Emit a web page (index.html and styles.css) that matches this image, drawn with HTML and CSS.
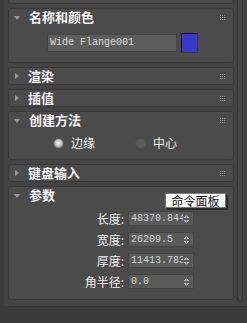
FILE: index.html
```html
<!DOCTYPE html>
<html>
<head>
<meta charset="utf-8">
<link rel="stylesheet" href="styles.css">
</head>
<body>
<div class="app">
  <div class="frame">
    <div class="panels">
      <div class="panel stub"></div>

      <div class="panel">
        <div class="head"><span class="tri down"></span><span class="title">名称和颜色</span><span class="grip"></span></div>
        <div class="body name-body">
          <div class="name-field">Wide Flange001</div>
          <div class="swatch"></div>
        </div>
      </div>

      <div class="panel">
        <div class="head"><span class="tri right"></span><span class="title">渲染</span><span class="grip"></span></div>
      </div>

      <div class="panel">
        <div class="head"><span class="tri right"></span><span class="title">插值</span><span class="grip"></span></div>
      </div>

      <div class="panel">
        <div class="head"><span class="tri down"></span><span class="title">创建方法</span><span class="grip"></span></div>
        <div class="body method-body">
          <label class="radio-opt"><span class="radio on"></span><span class="rlabel">边缘</span></label>
          <label class="radio-opt second"><span class="radio"></span><span class="rlabel">中心</span></label>
        </div>
      </div>

      <div class="panel">
        <div class="head"><span class="tri right"></span><span class="title">键盘输入</span><span class="grip"></span></div>
      </div>

      <div class="panel last">
        <div class="head"><span class="tri down"></span><span class="title">参数</span><span class="grip"></span></div>
        <div class="body params">
          <span class="plabel">长度:</span><div class="spin"><span class="val">48370.844</span><span class="arrows"></span></div>
          <span class="plabel">宽度:</span><div class="spin"><span class="val">26209.5</span><span class="arrows"></span></div>
          <span class="plabel">厚度:</span><div class="spin"><span class="val">11413.783</span><span class="arrows"></span></div>
          <span class="plabel">角半径:</span><div class="spin"><span class="val">0.0</span><span class="arrows"></span></div>
        </div>
        <div class="tooltip">命令面板</div>
      </div>
    </div>
    <div class="scroll"></div>
  </div>
</div>
</body>
</html>
```

FILE: styles.css
```css
html, body {
  margin: 0;
  padding: 0;
}
body {
  background: #3b3b3b;
  font-family: "Noto Sans CJK SC", "Noto Sans", sans-serif;
}
.app {
  width: 247px;
  height: 323px;
  overflow: hidden;
  background: #3b3b3b;
}
.frame {
  margin-left: 4px;
  width: 243px;
  height: 307px;
  background: #444444;
  display: flex;
  align-items: flex-start;
  padding-left: 4px;
  box-sizing: border-box;
  border-bottom: 1px solid #363636;
}
.panels {
  width: 226px;
  display: flex;
  flex-direction: column;
  gap: 4px;
  margin-top: -4px;
}
.panel {
  position: relative;
  background: #4b4b4b;
  border: 1px solid #393939;
  border-radius: 3px;
  box-sizing: border-box;
}
.panel.stub {
  height: 8px;
}
.head {
  height: 16px;
  display: flex;
  align-items: center;
  position: relative;
}
.tri {
  width: 0;
  height: 0;
  margin-left: 5px;
  margin-right: 9px;
}
.tri.down {
  border-left: 3px solid transparent;
  border-right: 3px solid transparent;
  border-top: 4px solid #9a9a9a;
  margin-top: 1px;
}
.tri.right {
  border-top: 3px solid transparent;
  border-bottom: 3px solid transparent;
  border-left: 4px solid #9a9a9a;
  margin-left: 6px;
  margin-right: 9px;
}
.title {
  color: #f2f2f2;
  font-weight: bold;
  font-size: 13px;
  line-height: 16px;
}
.grip {
  position: absolute;
  right: 8px;
  top: 6px;
  width: 5px;
  height: 5px;
  background-image: radial-gradient(circle, #8c8c8c 0.6px, transparent 0.7px);
  background-size: 2px 2px;
  background-position: -0.5px -0.5px;
  background:
    linear-gradient(#8a8a8a, #8a8a8a) 0 0 / 1px 1px no-repeat,
    linear-gradient(#8a8a8a, #8a8a8a) 2px 0 / 1px 1px no-repeat,
    linear-gradient(#8a8a8a, #8a8a8a) 4px 0 / 1px 1px no-repeat,
    linear-gradient(#8a8a8a, #8a8a8a) 0 2px / 1px 1px no-repeat,
    linear-gradient(#8a8a8a, #8a8a8a) 2px 2px / 1px 1px no-repeat,
    linear-gradient(#8a8a8a, #8a8a8a) 4px 2px / 1px 1px no-repeat,
    linear-gradient(#8a8a8a, #8a8a8a) 0 4px / 1px 1px no-repeat,
    linear-gradient(#8a8a8a, #8a8a8a) 2px 4px / 1px 1px no-repeat,
    linear-gradient(#8a8a8a, #8a8a8a) 4px 4px / 1px 1px no-repeat;
}
.name-body {
  display: flex;
  align-items: center;
  padding: 8px 0 9px 38px;
}
.name-field {
  width: 130px;
  height: 18px;
  box-sizing: border-box;
  background: #5d5d5d;
  border: 1px solid #444;
  color: #dcdcdc;
  font-family: "Liberation Mono", monospace;
  font-size: 10px;
  line-height: 16px;
  padding-left: 2px;
  white-space: nowrap;
  overflow: hidden;
}
.swatch {
  width: 17px;
  height: 20px;
  margin-left: 4px;
  box-sizing: border-box;
  background: #3a38cc;
  border-top: 1px solid #111;
  border-left: 1px solid #111;
  border-right: 1px solid #3a3a3a;
  border-bottom: 1px solid #3a3a3a;
}
.method-body {
  display: flex;
  align-items: center;
  height: 31px;
  padding-left: 44px;
  padding-bottom: 1px;
  box-sizing: border-box;
}
.radio-opt {
  display: flex;
  align-items: center;
}
.radio-opt.second {
  margin-left: 40px;
}
.radio {
  width: 11px;
  height: 11px;
  border-radius: 50%;
  background: #5a5a5a;
  border: 1px solid #505050;
  box-sizing: border-box;
  margin-right: 7px;
}
.radio.on {
  background: radial-gradient(circle at 50% 45%, #f2f2f2 0, #d8d8d8 2px, #a8a8a8 4px, #6a6a6a 5.5px);
  border-color: #5a5a5a;
}
.rlabel {
  color: #eeeeee;
  font-size: 12px;
  line-height: 16px;
}
.params {
  display: grid;
  grid-template-columns: 115px 66px;
  column-gap: 4px;
  row-gap: 6px;
  padding: 8px 0 10px 0;
  align-items: center;
}
.plabel {
  text-align: right;
  color: #f0f0f0;
  font-size: 12px;
  line-height: 15px;
}
.spin {
  height: 15px;
  box-sizing: border-box;
  background: #5a5a5a;
  border: 1px solid #444;
  display: flex;
  align-items: center;
  position: relative;
}
.val {
  color: #d4d4d4;
  font-family: "Liberation Mono", monospace;
  font-size: 10px;
  line-height: 13px;
  padding-left: 2px;
  width: 52px;
  overflow: hidden;
  white-space: nowrap;
}
.arrows {
  position: absolute;
  right: 4px;
  top: 3px;
  width: 5px;
  height: 8px;
  background:
    linear-gradient(to bottom right, transparent 50%, #bdbdbd 50%) 0 0 / 2.5px 3px no-repeat,
    linear-gradient(to bottom left, transparent 50%, #bdbdbd 50%) 2.5px 0 / 2.5px 3px no-repeat,
    linear-gradient(to top right, transparent 50%, #bdbdbd 50%) 0 5px / 2.5px 3px no-repeat,
    linear-gradient(to top left, transparent 50%, #bdbdbd 50%) 2.5px 5px / 2.5px 3px no-repeat;
}
.tooltip {
  position: absolute;
  left: 156px;
  top: 6px;
  width: 61px;
  height: 15px;
  box-sizing: border-box;
  background: #ffffff;
  border: 1px solid #777;
  box-shadow: 2px 2px 0 #2a2a2a;
  color: #111;
  font-size: 12px;
  line-height: 13px;
  text-align: center;
}
.scroll {
  margin-left: 3px;
  width: 6px;
  height: 302px;
  box-sizing: border-box;
  background: #474747;
  border: 1px solid #363636;
  border-top: none;
  border-radius: 0 0 3px 3px;
}
```
